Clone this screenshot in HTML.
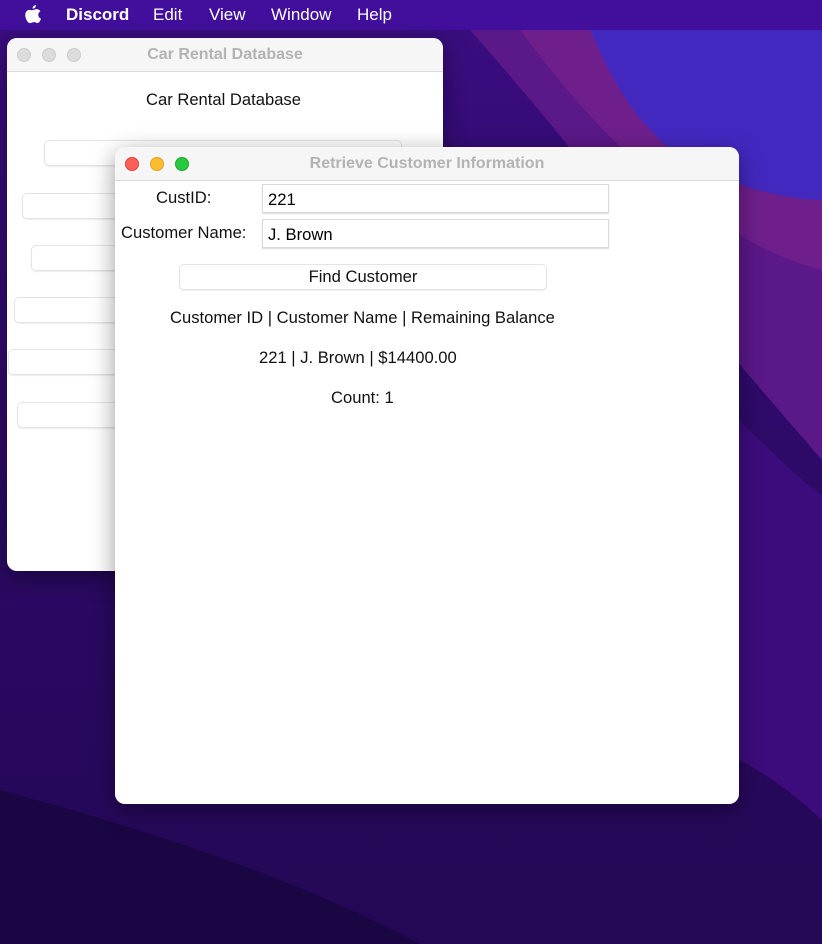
<!DOCTYPE html>
<html><head><style>
*{margin:0;padding:0;box-sizing:border-box}
body{width:822px;height:944px;overflow:hidden;position:relative;font-family:"Liberation Sans",sans-serif;background:#24085a}
.menu{position:absolute;left:0;top:0;width:822px;height:30px;background:#410f9c;color:#fff;font-size:17px}
.menu span{position:absolute;top:5px}
.win{position:absolute;background:#fff;border-radius:10px;overflow:hidden;box-shadow:0 6px 24px rgba(0,0,0,.4)}
.tb{height:34px;background:#f6f6f6;border-bottom:1px solid #dcdcdc;position:relative;text-align:center;color:#b3b3b3;font-weight:bold;font-size:16px;line-height:33px}
.dot{position:absolute;top:10px;width:14px;height:14px;border-radius:50%}
.btn{position:absolute;height:26px;border:1px solid #e4e4e4;border-radius:5px;background:#fff;box-shadow:0 1px 1px rgba(0,0,0,.08)}
.t{position:absolute;font-size:16.6px;color:#111;white-space:nowrap}
.inp{position:absolute;height:29px;border:1px solid #dadada;background:#fff;box-shadow:0 1px 1px rgba(0,0,0,.15);font-size:16.6px;padding:5px 5px}
</style></head><body>
<svg style="position:absolute;left:0;top:0" width="822" height="944">
<defs><linearGradient id="g" x1="0" y1="0" x2="0" y2="1"><stop offset="0" stop-color="#3a0d80"/><stop offset="0.6" stop-color="#2a0962"/><stop offset="1" stop-color="#240856"/></linearGradient></defs>
<rect width="822" height="944" fill="url(#g)"/>
<path d="M470 30 C540 110 590 170 640 240 C700 320 770 400 822 460 V30Z" fill="#5a1888"/>
<path d="M520 30 C580 110 620 150 660 180 C720 230 780 260 822 270 V30Z" fill="#6e1f8c"/>
<path d="M590 30 C620 100 650 140 700 170 C750 190 790 200 822 200 V30Z" fill="#4328c0"/>
<path d="M739 420 C780 460 800 480 822 495 V820 C790 790 760 770 739 760Z" fill="#3d0c7c"/>
<path d="M0 790 C150 830 300 880 420 944 H0Z" fill="#1b0644"/>
</svg>
<div class="menu">
<svg style="position:absolute;left:24px;top:5px" width="18" height="20" viewBox="0 0 18 20"><path d="M12 0c0 2-1.6 3.8-3.4 3.7C8.4 1.8 10 .2 12 0zM9 5c1 0 2.3-1 3.6-.9 2 .1 3.2 1.2 3.8 2.1-3.2 1.9-2.6 6.3.6 7.5-.6 1.7-1.8 4.3-3.4 4.3-1.4 0-1.8-.9-3.5-.9s-2.2.9-3.5.9C4.2 19 .8 13.5 1.3 9.2 1.7 6.4 3.6 4.9 5.4 4.9 7 4.9 8 5.9 9 5z" fill="#fff"/></svg>
<span style="left:66px;font-weight:bold">Discord</span><span style="left:153px">Edit</span><span style="left:209px">View</span><span style="left:271px">Window</span><span style="left:357px">Help</span>
</div>
<div class="win" style="left:7px;top:38px;width:436px;height:533px">
<div class="tb"><div class="dot" style="left:10px;background:#dcdcdc;border:1px solid #ccc"></div><div class="dot" style="left:35px;background:#dcdcdc;border:1px solid #ccc"></div><div class="dot" style="left:60px;background:#dcdcdc;border:1px solid #ccc"></div>Car Rental Database</div>
<div class="t" style="left:139px;top:52px">Car Rental Database</div>
<div class="btn" style="left:37px;top:102px;width:358px"></div>
<div class="btn" style="left:15px;top:155px;width:200px"></div>
<div class="btn" style="left:24px;top:207px;width:200px"></div>
<div class="btn" style="left:7px;top:259px;width:200px"></div>
<div class="btn" style="left:1px;top:311px;width:200px"></div>
<div class="btn" style="left:10px;top:364px;width:200px"></div>
</div>
<div class="win" style="left:115px;top:147px;width:624px;height:657px">
<div class="tb"><div class="dot" style="left:10px;background:#fc5f57;border:1px solid #e0443e"></div><div class="dot" style="left:35px;background:#fdbc2e;border:1px solid #dea123"></div><div class="dot" style="left:60px;background:#28c840;border:1px solid #1aab29"></div>Retrieve Customer Information</div>
<div class="t" style="left:41px;top:41px">CustID:</div>
<div class="inp" style="left:147px;top:37px;width:347px">221</div>
<div class="t" style="left:6px;top:76px">Customer Name:</div>
<div class="inp" style="left:147px;top:72px;width:347px">J. Brown</div>
<div class="btn" style="left:64px;top:117px;width:368px;text-align:center;font-size:16.6px;line-height:24px;color:#111">Find Customer</div>
<div class="t" style="left:55px;top:161px">Customer ID | Customer Name | Remaining Balance</div>
<div class="t" style="left:144px;top:201px">221 | J. Brown | $14400.00</div>
<div class="t" style="left:216px;top:241px">Count: 1</div>
</div>
</body></html>
